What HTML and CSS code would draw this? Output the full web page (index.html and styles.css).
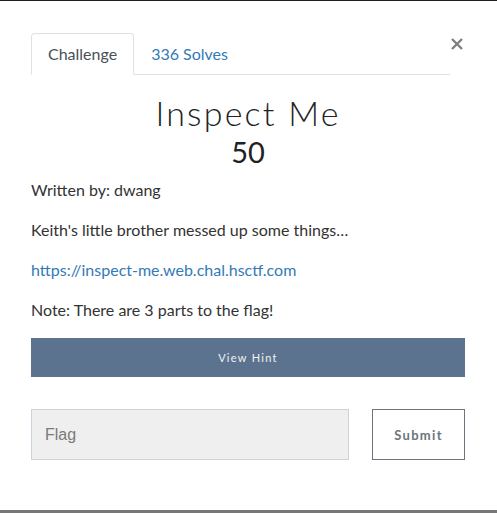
FILE: index.html
```html
<!DOCTYPE html>
<html>
<head>
<meta charset="utf-8">
<link rel="stylesheet" href="styles.css">
</head>
<body>
<div class="page">
  <div class="topline"></div>
  <div class="modal">
    <div class="tabrow">
      <ul class="tabs">
        <li class="tab active">Challenge</li>
        <li class="tab link">336 Solves</li>
      </ul>
      <button class="close" aria-label="Close">
        <svg width="12" height="12" viewBox="0 0 12 12"><path d="M1 1 L11 11 M11 1 L1 11" stroke="#808080" stroke-width="2.4" stroke-linecap="butt"/></svg>
      </button>
    </div>
    <h1 class="title">Inspect Me</h1>
    <div class="points">50</div>
    <p class="text">Written by: dwang</p>
    <p class="text">Keith's little brother messed up some things…</p>
    <p class="text"><a class="url" href="#">https://inspect-me.web.chal.hsctf.com</a></p>
    <p class="text">Note: There are 3 parts to the flag!</p>
    <button class="hint">View Hint</button>
    <div class="submitrow">
      <input class="flag" type="text" placeholder="Flag">
      <button class="submit">Submit</button>
    </div>
  </div>
  <div class="bottombar"></div>
</div>
</body>
</html>
```

FILE: styles.css
```css
html, body {
  margin: 0;
  padding: 0;
  background: #fff;
}
.page {
  width: 497px;
  height: 513px;
  position: relative;
  overflow: hidden;
  display: flex;
  flex-direction: column;
  font-family: "Lato", "Liberation Sans", sans-serif;
  color: #333;
}
.topline {
  height: 1px;
  background: #1c1f22;
}
.modal {
  flex: 1;
  padding: 32px 32px 0 31px;
}
.tabrow {
  display: flex;
  align-items: flex-start;
}
.tabs {
  flex: 1;
  list-style: none;
  margin: 0;
  padding: 0;
  display: flex;
  border-bottom: 1px solid #dee2e6;
  height: 41px;
}
.tab {
  font-size: 16px;
  line-height: 24px;
  padding: 8px 16px 8px 16px;
  border: 1px solid transparent;
  border-top-left-radius: 4px;
  border-top-right-radius: 4px;
  margin-bottom: -1px;
}
.tab.active {
  color: #495057;
  border-color: #dee2e6 #dee2e6 #fff;
  background: #fff;
}
.tab.link {
  color: #337ab7;
}
.close {
  background: none;
  border: 0;
  padding: 0;
  margin: 5px 2px 0 1px;
  width: 12px;
  height: 12px;
  display: block;
}
.close svg { display: block; }
.title {
  margin: 18px 0 0;
  text-align: center;
  font-family: "Lato", sans-serif;
  font-weight: 300;
  font-size: 34px;
  letter-spacing: 2.2px;
  line-height: 40px;
  color: #222;
}
.points {
  text-align: center;
  font-size: 29px;
  line-height: 34px;
  color: #222;
  margin: 2px 0 9px;
}
.text {
  margin: 0 0 16px;
  font-size: 16px;
  line-height: 24px;
}
.url {
  color: #337ab7;
  text-decoration: none;
}
.hint {
  display: block;
  width: 100%;
  height: 39px;
  margin-top: 2px;
  background: #5c7390;
  border: 0;
  color: #f2f2f2;
  font-family: "Lato", sans-serif;
  font-size: 11px;
  letter-spacing: 1.3px;
}
.submitrow {
  display: flex;
  gap: 23px;
  margin-top: 32px;
}
.flag {
  width: 318px;
  height: 51px;
  box-sizing: border-box;
  background: #efefef;
  border: 1px solid #ccd3db;
  padding: 0 13px;
  font-family: "Liberation Sans", Arial, sans-serif;
  font-size: 16px;
  outline: none;
}
.flag::placeholder { color: #7a7a7a; }
.submit {
  width: 93px;
  height: 51px;
  box-sizing: border-box;
  background: #fff;
  border: 1px solid #6c757d;
  color: #6c757d;
  font-family: "Lato", sans-serif;
  font-weight: 700;
  font-size: 13px;
  letter-spacing: 1.3px;
}
.bottombar {
  position: absolute;
  left: 0;
  right: 0;
  bottom: 0;
  height: 3px;
  background: #777;
}
```
